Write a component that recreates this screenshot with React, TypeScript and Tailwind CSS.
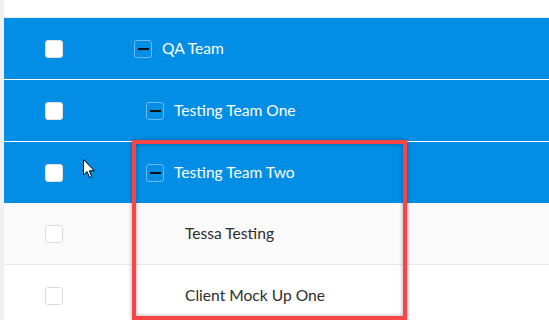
import React from "react";

const BLUE = "bg-[#038ee5]";

function Check({ onBlue }: { onBlue: boolean }) {
  return (
    <div
      className={
        "w-[18px] h-[18px] rounded-[3px] bg-white border " +
        (onBlue ? "border-[#e3e3e3]" : "border-[#dcdcdc]")
      }
    />
  );
}

function Minus() {
  return (
    <div className="w-[18px] h-[18px] rounded-[3px] border-[1.5px] border-[#6cbaf2] flex items-center justify-center shrink-0">
      <div className="w-[11px] h-[2px] bg-[#111]" />
    </div>
  );
}

type Row = { label: string; level: number; expandable: boolean; selected: boolean; bg: string; border: string };

const rows: Row[] = [
  { label: "QA Team", level: 0, expandable: true, selected: true, bg: BLUE, border: "border-b border-white" },
  { label: "Testing Team One", level: 1, expandable: true, selected: true, bg: BLUE, border: "border-b border-white" },
  { label: "Testing Team Two", level: 1, expandable: true, selected: true, bg: BLUE, border: "" },
  { label: "Tessa Testing", level: 2, expandable: false, selected: false, bg: "bg-[#fafafa]", border: "border-b border-b-[#e8e8e8]" },
  { label: "Client Mock Up One", level: 2, expandable: false, selected: false, bg: "bg-white", border: "" },
];

const pads = ["pl-[14px]", "pl-[26px]", "pl-[37px]"];

export default function App() {
  return (
    <div
      className="relative w-[549px] h-[320px] overflow-hidden bg-white flex"
      style={{ fontFamily: "Lato, 'Noto Sans', sans-serif" }}
    >
      <div className="w-[4px] h-full bg-[#f0f0f3] shrink-0" />
      <div className="flex-1 flex flex-col">
        <div className="h-[18px] shrink-0 border-b border-[#ececec] bg-white" />
        {rows.map((r, i) => (
          <div
            key={i}
            className={"flex items-center shrink-0 " + r.bg + " " + r.border + " " + (i === 2 ? "h-[61px]" : "h-[62px]")}
          >
            <div className="w-[116px] pl-[41px] flex items-center shrink-0">
              <Check onBlue={r.selected} />
            </div>
            <div className={"flex items-center " + pads[r.level]}>
              {r.expandable ? <Minus /> : <div className="w-[18px] h-[18px]" />}
              <span
                className={
                  "ml-[10px] text-[15.6px] leading-none " +
                  (r.selected ? "text-white" : "text-[#2d2d2d]")
                }
              >
                {r.label}
              </span>
            </div>
          </div>
        ))}
      </div>

      {/* annotation highlight box */}
      <div className="absolute left-[132px] top-[140px] w-[275px] h-[180px] border-4 border-[#fb4448] shadow-[0_0_4px_rgba(0,0,0,0.35),inset_0_0_4px_rgba(0,0,0,0.35)] pointer-events-none" />

      {/* mouse cursor */}
      <svg
        className="absolute left-[83px] top-[159px]"
        width="13"
        height="20"
        viewBox="0 0 13 20"
      >
        <path
          d="M0.5 0.5 L0.5 16 L4 12.6 L6.6 18.6 L8.8 17.6 L6.3 11.8 L11.3 11.8 Z"
          fill="#fff"
          stroke="#000"
          strokeWidth="1"
          strokeLinejoin="round"
        />
      </svg>
    </div>
  );
}
